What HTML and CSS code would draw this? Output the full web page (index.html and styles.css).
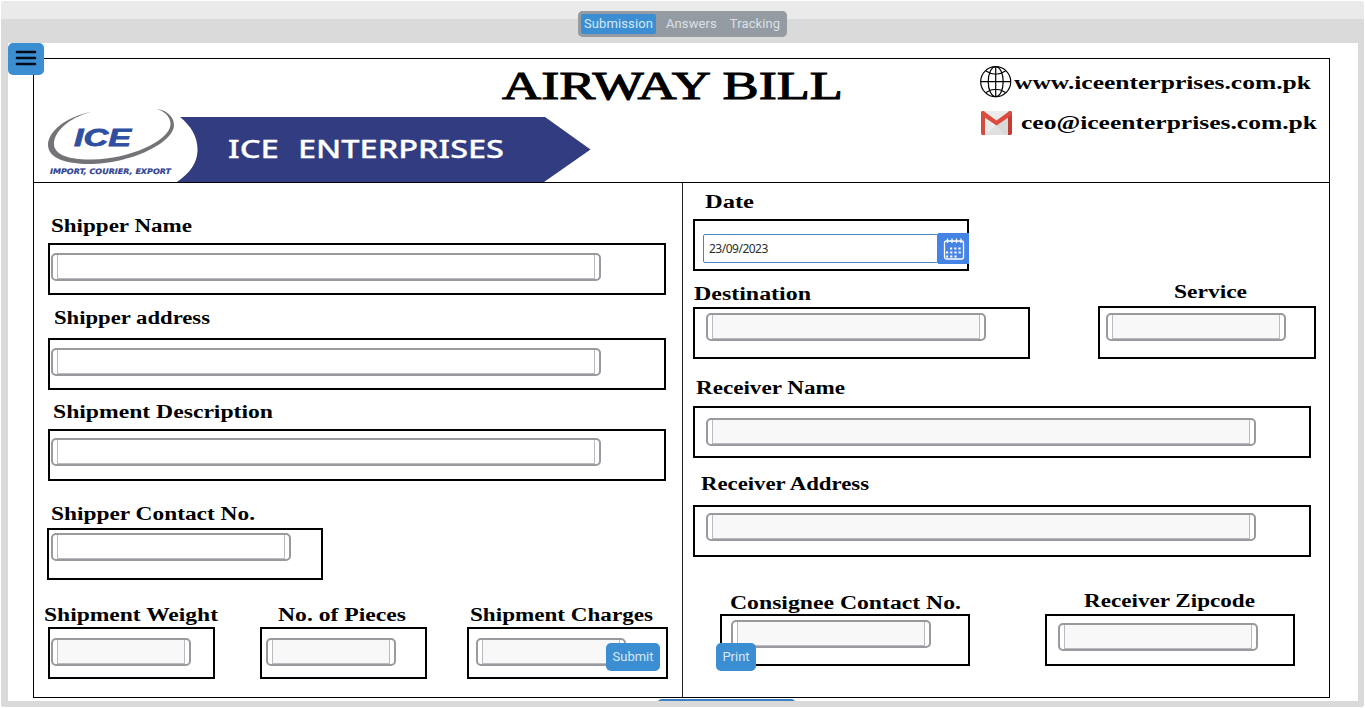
FILE: index.html
```html
<!DOCTYPE html>
<html lang="en">
<head>
<meta charset="utf-8">
<title>Airway Bill</title>
<link rel="stylesheet" href="styles.css">
</head>
<body>
<div class="frame">
  <nav class="topbar">
    <div class="tabs">
      <span class="tab active">Submission</span>
      <span class="tab">Answers</span>
      <span class="tab">Tracking</span>
    </div>
  </nav>
  <main class="sheet">
    <button class="menu" aria-label="Menu"><span></span><span></span><span></span></button>
    <div class="bill">
      <header class="head">
        <div class="head-left">
          <svg class="title" width="350" height="46"><text x="2" y="39.500" textLength="341" lengthAdjust="spacingAndGlyphs">AIRWAY BILL</text></svg>
          <svg class="brand" width="566" height="77" viewBox="34 105 566 77">
            <path class="swoosh" d="M91 112C65 117 48 132 48 145C48 158 66 164 89 164C130 164 174 143 174 125C174 117 167 110 157 109C166 112 171 118 170.500 125C169 141 130 159 92 159.500C70 160 54 155 54 144C54 132 68 118 91 112Z"/>
            <text class="ice" x="74" y="145.500" textLength="57" lengthAdjust="spacingAndGlyphs">ICE</text>
            <text class="tagline" x="50" y="174" textLength="121" lengthAdjust="spacingAndGlyphs">IMPORT, COURIER, EXPORT</text>
            <path class="banner" d="M180 117H545L590.500 149.500L544 182H177C190 173 197 163 197.500 151C198 137 191 126 180 117Z"/>
            <text class="company" x="228" y="157.500" textLength="51" lengthAdjust="spacingAndGlyphs">ICE</text>
            <text class="company" x="298" y="157.500" textLength="206" lengthAdjust="spacingAndGlyphs">ENTERPRISES</text>
          </svg>
        </div>
        <div class="contacts">
          <div class="contact web">
            <svg width="32" height="32" viewBox="0 0 32 32" class="globe">
              <circle cx="15.700" cy="15.700" r="15"/><ellipse cx="15.700" cy="15.700" rx="7.500" ry="15"/>
              <path d="M15.700 0.700V30.700M0.700 15.700H30.700M6 5Q15.700 11.500 25.500 5M6 26.500Q15.700 20 25.500 26.500"/>
            </svg>
            <svg class="label" width="310" height="24"><text x="1" y="17.500" textLength="297" lengthAdjust="spacingAndGlyphs">www.iceenterprises.com.pk</text></svg>
          </div>
          <div class="contact mail">
            <svg width="33" height="24" viewBox="0 0 33 24">
              <rect x="1" width="31" height="24" rx="2" fill="#ebebeb"/>
              <path d="M4.500 24L16.500 14L28.500 24Z" fill="#e0e0e0"/>
              <path d="M15.500 14L28.500 4V24H25.500Z" fill="#d8d8d8"/>
              <path d="M1 2Q1 0 3 0L5 1V24H2.500Q1 24 1 22Z" fill="#d54c3f"/>
              <path d="M28 1L30 0Q32 0 32 2V22Q32 24 30.500 24H28Z" fill="#c23c32"/>
              <path d="M1 2Q1 0 3.500 0L16.500 9.500L29.500 0Q32 0 32 2V4L16.500 14.500L1 4Z" fill="#dc4b3f"/>
            </svg>
            <svg class="label" width="302" height="24"><text x="1" y="17" textLength="296" lengthAdjust="spacingAndGlyphs">ceo@iceenterprises.com.pk</text></svg>
          </div>
        </div>
      </header>
      <div class="columns">
        <section class="sender">
          <div class="field shipper-name">
            <svg class="label" width="150" height="24"><text x="0" y="18" textLength="141" lengthAdjust="spacingAndGlyphs">Shipper Name</text></svg>
            <div class="box"><div class="input"></div></div>
          </div>
          <div class="field shipper-address">
            <svg class="label" width="165" height="24"><text x="0" y="18" textLength="156" lengthAdjust="spacingAndGlyphs">Shipper address</text></svg>
            <div class="box"><div class="input"></div></div>
          </div>
          <div class="field description">
            <svg class="label" width="230" height="24"><text x="0" y="18" textLength="220" lengthAdjust="spacingAndGlyphs">Shipment Description</text></svg>
            <div class="box"><div class="input"></div></div>
          </div>
          <div class="field shipper-contact">
            <svg class="label" width="215" height="24"><text x="0" y="18" textLength="204" lengthAdjust="spacingAndGlyphs">Shipper Contact No.</text></svg>
            <div class="box"><div class="input"></div></div>
          </div>
          <div class="row totals">
            <div class="field weight">
              <svg class="label" width="180" height="24"><text x="0" y="18" textLength="174" lengthAdjust="spacingAndGlyphs">Shipment Weight</text></svg>
              <div class="box"><div class="input locked"></div></div>
            </div>
            <div class="field pieces">
              <svg class="label" width="140" height="24"><text x="0" y="18" textLength="128" lengthAdjust="spacingAndGlyphs">No. of Pieces</text></svg>
              <div class="box"><div class="input locked"></div></div>
            </div>
            <div class="field charges">
              <svg class="label" width="190" height="24"><text x="0" y="18" textLength="183" lengthAdjust="spacingAndGlyphs">Shipment Charges</text></svg>
              <div class="box"><div class="input locked"></div></div>
            </div>
          </div>
        </section>
        <section class="receiver">
          <div class="field date">
            <svg class="label" width="60" height="24"><text x="0" y="18" textLength="49" lengthAdjust="spacingAndGlyphs">Date</text></svg>
            <div class="box">
              <div class="date-value">23/09/2023</div>
              <div class="calendar">
                <svg width="22" height="24" viewBox="0 0 22 24">
                  <rect x="1.500" y="4" width="19" height="18" rx="2" class="cal-line"/>
                  <path class="cal-line" d="M4.500 1.500V6M9 1.500V6M13.500 1.500V6M18 1.500V6"/>
                  <path class="cal-dots" d="M7 11.500H19M3 15.500H19M3 19.500H15"/>
                </svg>
              </div>
            </div>
          </div>
          <div class="row routing">
            <div class="field destination">
              <svg class="label" width="125" height="24"><text x="0" y="18" textLength="117" lengthAdjust="spacingAndGlyphs">Destination</text></svg>
              <div class="box"><div class="input locked"></div></div>
            </div>
            <div class="field service">
              <svg class="label" width="80" height="24"><text x="0" y="18" textLength="73" lengthAdjust="spacingAndGlyphs">Service</text></svg>
              <div class="box"><div class="input locked"></div></div>
            </div>
          </div>
          <div class="field receiver-name">
            <svg class="label" width="160" height="24"><text x="0" y="18" textLength="149" lengthAdjust="spacingAndGlyphs">Receiver Name</text></svg>
            <div class="box"><div class="input locked"></div></div>
          </div>
          <div class="field receiver-address">
            <svg class="label" width="180" height="24"><text x="0" y="18" textLength="168" lengthAdjust="spacingAndGlyphs">Receiver Address</text></svg>
            <div class="box"><div class="input locked"></div></div>
          </div>
          <div class="row final">
            <div class="field consignee">
              <svg class="label" width="238" height="24"><text x="0" y="18" textLength="231" lengthAdjust="spacingAndGlyphs">Consignee Contact No.</text></svg>
              <div class="box"><div class="input locked"></div></div>
            </div>
            <div class="field zipcode">
              <svg class="label" width="180" height="24"><text x="0" y="18" textLength="171" lengthAdjust="spacingAndGlyphs">Receiver Zipcode</text></svg>
              <div class="box"><div class="input locked"></div></div>
            </div>
          </div>
        </section>
      </div>
    </div>
    <div class="next"></div>
    <button class="action submit">Submit</button>
    <button class="action print">Print</button>
  </main>
</div>
</body>
</html>
```

FILE: styles.css
```css
* { box-sizing: border-box; }
body { margin: 0; background: #fff; overflow: hidden; }
svg { display: block; flex: none; overflow: visible; }
.frame {
  width: 1363px; height: 706px; margin: 1px 1px 0;
  background: linear-gradient(#eaeaea 18px, #dadada 18px);
  border-radius: 2px; padding: 0 6px 0 7px;
  overflow: hidden;
}
.topbar { height: 42px; padding-top: 10px; display: flex; }
.tabs {
  width: 209px; height: 26px; margin-left: 570px; padding: 3px;
  display: flex; background: #959ba3; border-radius: 5px;
  box-shadow: inset 0 0 0 1px #9a9b9d;
}
.tab {
  font: 400 13px/20px Roboto, sans-serif; letter-spacing: 0.1px; flex: none;
  color: #dbe0e8; text-align: center; padding: 0; white-space: nowrap;
}
.tab + .tab { width: 50px; margin-left: 10px; }
.tab + .tab + .tab { width: 52px; margin-left: 13px; }
.tab.active { width: 75px; background: #3b8ed2; border-radius: 2px; color: #d5e8f8; }

.sheet { position: relative; height: 658px; background: #fff; padding: 15px 0 0 25px; overflow: hidden; }
.menu {
  position: absolute; left: 0; top: 0; width: 36px; height: 32px;
  border: 0; border-radius: 5px; background: #3b8ed2; padding: 0 8px 2px;
  display: flex; flex-direction: column; justify-content: center; gap: 4px;
}
.menu span { display: block; height: 2px; background: #050b18; border-radius: 1px; width: 20px; flex: none; box-shadow: 0 0 0 0.300px #050b18; }
.bill { width: 1297px; height: 640px; border: 1px solid #000; }
.head { height: 124px; border-bottom: 1px solid #000; display: flex; }
.head-left { width: 946px; flex: none; }
.title { margin-left: 466px; }
.title text, .label text { font-family: "Liberation Serif", serif; font-weight: 700; fill: #000; }
.title text { font-size: 39.500px; font-weight: 400; stroke: #000; stroke-width: 1px; }
.label text { font-size: 18px; transform: translateY(1px); }
.swoosh { fill: #747478; }
.ice { font: italic 700 24.500px "Liberation Sans", sans-serif; fill: #2f4fa0; stroke: #2f4fa0; stroke-width: 0.8px; }
.tagline { font: italic 700 7.500px "DejaVu Sans", sans-serif; fill: #2f4391; stroke: #2f4391; stroke-width: 0.2px; }
.banner { fill: #323c80; }
.company { font: 500 24.500px "Noto Sans", sans-serif; fill: #fff; stroke: #fff; stroke-width: 0.3px; }
.contact { display: flex; align-items: center; }
.web { margin-top: 7px; gap: 1px; }
.mail { margin: 13px 0 0; gap: 7px; }
.globe { fill: none; stroke: #000; stroke-width: 1.2px; }

.columns { display: flex; height: 514px; }
.sender { width: 649px; flex: none; border-right: 1px solid #222; }
.receiver { flex: 1; }
.row { display: flex; align-items: flex-end; }
.field { flex: none; }
.box { border: 2px solid #000; height: 52px; width: 618px; }
.input {
  height: 28px; width: 550px; border: 2px solid #99999e; border-radius: 5px;
  padding: 0 4px 1px; background: #fff; overflow: hidden;
}
.input::before {
  content: ""; display: block; height: 100%;
  border: 1px solid #babac0; border-top: 0;
}
.input.locked::before { background: #f8f8f9; }

.shipper-name { margin: 30px 0 0 14px; }
.shipper-name .label { margin: 0 0 6px 3px; }
.shipper-name .input { margin: 8px 0 0 1px; }
.shipper-address { margin: 10px 0 0 14px; }
.shipper-address .label { margin: 0 0 9px 6px; }
.shipper-address .input { margin: 8px 0 0 1px; }
.description { margin: 9px 0 0 14px; }
.description .label { margin: 0 0 6px 5px; }
.description .input { margin: 7px 0 0 1px; }
.shipper-contact { margin: 20px 0 0 13px; }
.shipper-contact .label { margin: 0 0 3px 4px; }
.shipper-contact .box { width: 276px; }
.shipper-contact .input { margin: 3px 0 0 2px; width: 240px; }
.totals { margin: 22px 0 0 10px; }
.totals .label { margin-bottom: 1px; }
.totals .input { margin-top: 9px; }
.weight { width: 216px; }
.weight .box { margin-left: 4px; width: 167px; }
.weight .input { margin-left: 1px; width: 140px; }
.pieces { width: 207px; }
.pieces .label { margin-left: 18px; }
.pieces .box { width: 167px; }
.pieces .input { margin-left: 4px; width: 130px; }
.charges .label { margin-left: 3px; }
.charges .box { width: 201px; }
.charges .input { margin-left: 7px; width: 150px; }

.date { margin: 6px 0 0 10px; }
.date .label { margin: 0 0 6px 12px; }
.date .box { width: 276px; padding: 12px 0 0 8px; display: flex; }
.date-value {
  width: 235px; height: 29px; margin-top: 1px; border: 1px solid #4a83c4;
  border-radius: 2px 0 0 2px; padding-left: 5px; flex: none;
  font: 12px/27px "Noto Sans", sans-serif; letter-spacing: -0.5px; color: #2d2d2d;
}
.calendar {
  width: 31px; height: 31px; flex: none; background: #4583e4;
  display: flex; align-items: center; justify-content: center;
}
.cal-line { fill: none; stroke: #fff; stroke-width: 1.3px; }
.cal-dots { stroke: #fff; stroke-width: 2px; stroke-dasharray: 2.200 2; }
.routing { margin: 8px 0 0 10px; }
.destination { width: 405px; }
.destination .label { margin: 0 0 2px 1px; }
.destination .box { width: 337px; }
.destination .input { margin: 4px 0 0 11px; width: 280px; }
.service .label { margin: 0 0 3px 76px; }
.service .box { width: 218px; height: 53px; }
.service .input { margin: 5px 0 0 6px; width: 180px; }
.receiver-name { margin: 16px 0 0 10px; }
.receiver-name .label { margin: 0 0 7px 3px; }
.receiver-name .input { margin: 10px 0 0 11px; }
.receiver-address { margin: 13px 0 0 10px; }
.receiver-address .label { margin: 0 0 10px 8px; }
.receiver-address .input { margin: 6px 0 0 11px; }
.final { margin: 31px 0 0 37px; }
.consignee { width: 325px; }
.consignee .label { margin-left: 10px; }
.consignee .box { width: 250px; }
.consignee .input { margin: 4px 0 0 9px; width: 200px; }
.zipcode .label { margin: 0 0 2px 39px; }
.zipcode .box { width: 250px; }
.zipcode .input { margin: 7px 0 0 11px; width: 200px; }

.next { width: 139px; height: 20px; margin: 1px 0 0 624px; background: #3b82c0; border-radius: 5px; }
.action {
  position: absolute; top: 600px; height: 28px; padding: 0; border: 0; border-radius: 5px;
  background: #3b8ed2; color: #d5e8f8; font: 400 13px/28px Roboto, sans-serif; letter-spacing: 0;
}
.submit { left: 598px; width: 54px; }
.print { left: 708px; width: 40px; }
```
